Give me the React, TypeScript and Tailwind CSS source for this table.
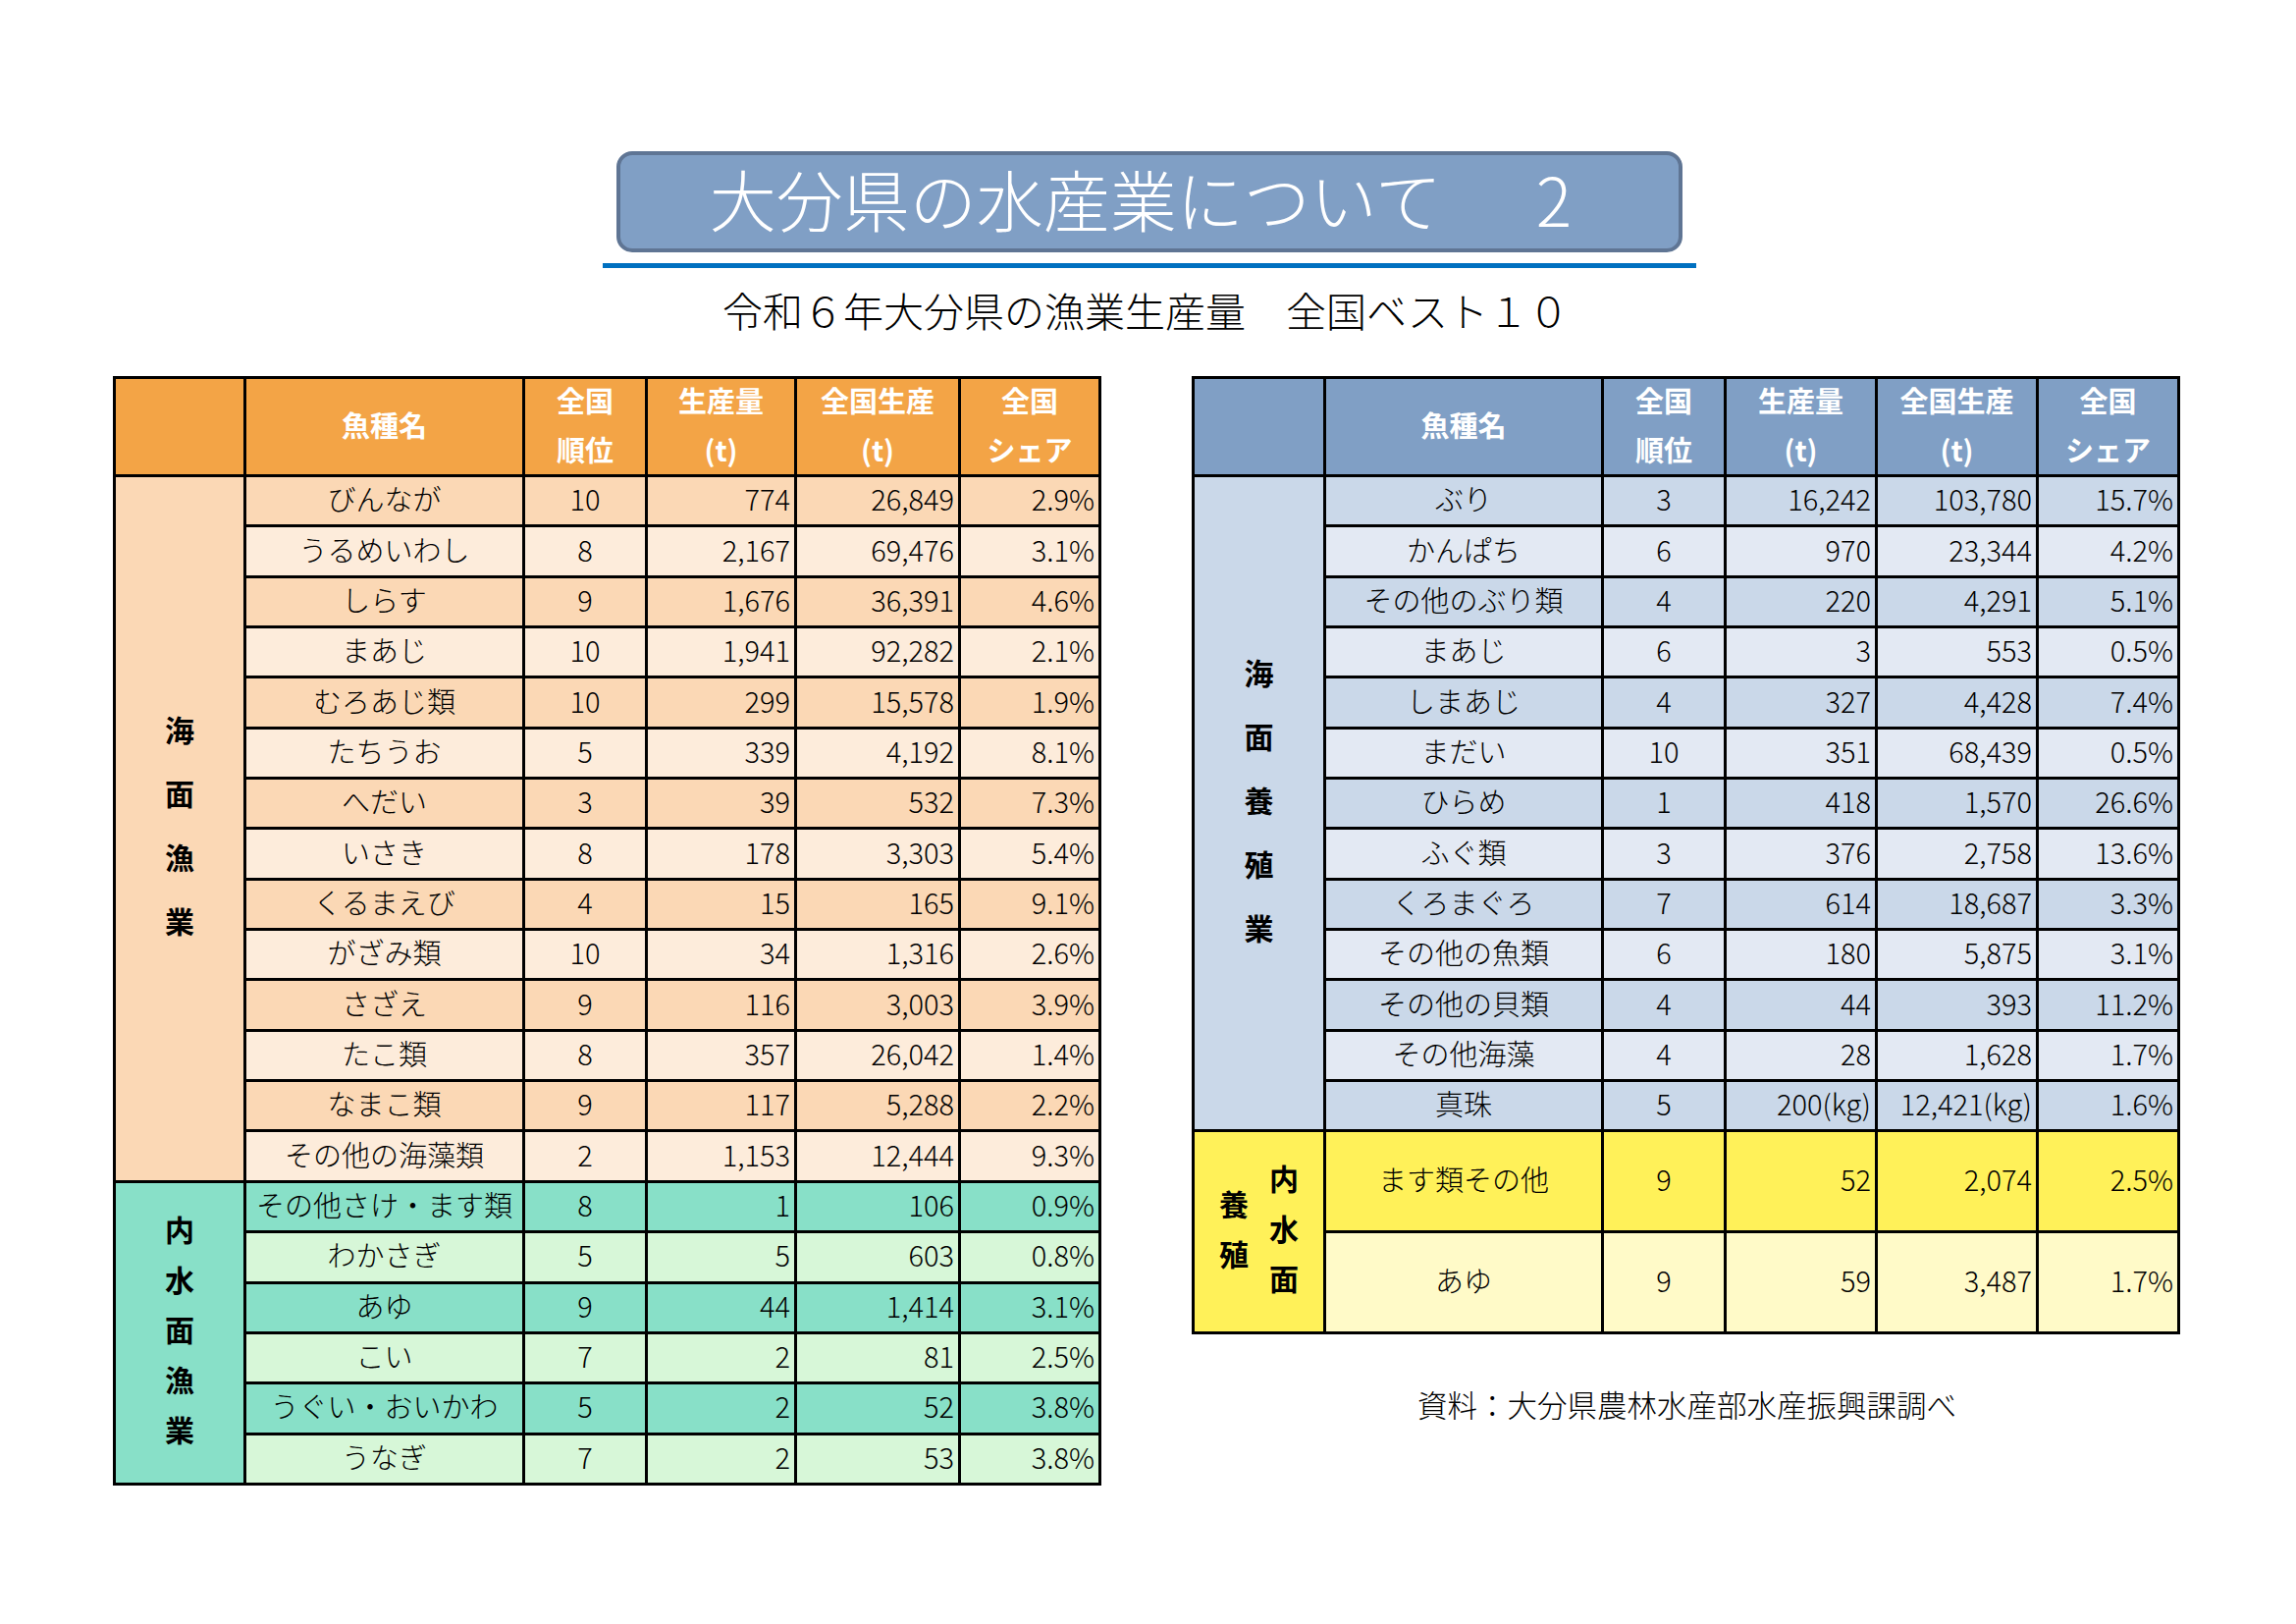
import React from "react";

type Row = [string, string, string, string, string];

const seaFishing: Row[] = [
  ["びんなが", "10", "774", "26,849", "2.9%"],
  ["うるめいわし", "8", "2,167", "69,476", "3.1%"],
  ["しらす", "9", "1,676", "36,391", "4.6%"],
  ["まあじ", "10", "1,941", "92,282", "2.1%"],
  ["むろあじ類", "10", "299", "15,578", "1.9%"],
  ["たちうお", "5", "339", "4,192", "8.1%"],
  ["へだい", "3", "39", "532", "7.3%"],
  ["いさき", "8", "178", "3,303", "5.4%"],
  ["くるまえび", "4", "15", "165", "9.1%"],
  ["がざみ類", "10", "34", "1,316", "2.6%"],
  ["さざえ", "9", "116", "3,003", "3.9%"],
  ["たこ類", "8", "357", "26,042", "1.4%"],
  ["なまこ類", "9", "117", "5,288", "2.2%"],
  ["その他の海藻類", "2", "1,153", "12,444", "9.3%"],
];

const inlandFishing: Row[] = [
  ["その他さけ・ます類", "8", "1", "106", "0.9%"],
  ["わかさぎ", "5", "5", "603", "0.8%"],
  ["あゆ", "9", "44", "1,414", "3.1%"],
  ["こい", "7", "2", "81", "2.5%"],
  ["うぐい・おいかわ", "5", "2", "52", "3.8%"],
  ["うなぎ", "7", "2", "53", "3.8%"],
];

const seaCulture: Row[] = [
  ["ぶり", "3", "16,242", "103,780", "15.7%"],
  ["かんぱち", "6", "970", "23,344", "4.2%"],
  ["その他のぶり類", "4", "220", "4,291", "5.1%"],
  ["まあじ", "6", "3", "553", "0.5%"],
  ["しまあじ", "4", "327", "4,428", "7.4%"],
  ["まだい", "10", "351", "68,439", "0.5%"],
  ["ひらめ", "1", "418", "1,570", "26.6%"],
  ["ふぐ類", "3", "376", "2,758", "13.6%"],
  ["くろまぐろ", "7", "614", "18,687", "3.3%"],
  ["その他の魚類", "6", "180", "5,875", "3.1%"],
  ["その他の貝類", "4", "44", "393", "11.2%"],
  ["その他海藻", "4", "28", "1,628", "1.7%"],
  ["真珠", "5", "200(kg)", "12,421(kg)", "1.6%"],
];

const inlandCulture: Row[] = [
  ["ます類その他", "9", "52", "2,074", "2.5%"],
  ["あゆ", "9", "59", "3,487", "1.7%"],
];

function HeaderCells({ bg }: { bg: string }) {
  const cls = `${bg} flex flex-col items-center justify-center pb-[5px] text-white font-bold text-[29px] leading-[50px]`;
  return (
    <>
      <div className={bg} />
      <div className={cls}>
        <span>魚種名</span>
      </div>
      <div className={cls}>
        <span>全国</span>
        <span>順位</span>
      </div>
      <div className={cls}>
        <span>生産量</span>
        <span>(t)</span>
      </div>
      <div className={cls}>
        <span>全国生産</span>
        <span>(t)</span>
      </div>
      <div className={cls}>
        <span>全国</span>
        <span>シェア</span>
      </div>
    </>
  );
}

function DataRow({ row, bg }: { row: Row; bg: string }) {
  const base = `${bg} flex items-center pb-[5px] text-[29px] leading-none font-light text-black whitespace-nowrap`;
  return (
    <>
      <div className={`${base} justify-center`}>{row[0]}</div>
      <div className={`${base} justify-center`}>{row[1]}</div>
      <div className={`${base} justify-end pr-[4px]`}>{row[2]}</div>
      <div className={`${base} justify-end pr-[4px]`}>{row[3]}</div>
      <div className={`${base} justify-end pr-[4px]`}>{row[4]}</div>
    </>
  );
}

function VLabel({ text, leading }: { text: string; leading: string }) {
  return (
    <div className={`flex flex-col items-center font-bold text-[30px] text-black ${leading}`}>
      {text.split("").map((c, i) => (
        <span key={i}>{c}</span>
      ))}
    </div>
  );
}

export default function App() {
  return (
    <div className="w-[2339px] h-[1654px] bg-white overflow-hidden font-['Noto_Sans_CJK_JP','Noto_Sans',sans-serif] text-black">
      {/* Title */}
      <div className="pt-[154px] pl-[628px]">
        <div className="w-[1086px] h-[103px] rounded-[16px] border-[4px] border-[#5f7594] bg-[#809fc5] flex items-center justify-center pr-[18px] pb-[8px] text-white text-[68px] font-light leading-none">
          <span>
            大分県の水産業について<span className="ml-[96px]">2</span>
          </span>
        </div>
      </div>
      <div className="mt-[11px] ml-[614px] w-[1114px] h-[5px] bg-[#0070c0]" />
      <div className="ml-[614px] w-[1114px] mt-[18px] pr-[8px] text-center text-[41px] leading-[48px] font-light">
        令和６年大分県の漁業生産量　全国ベスト１０
      </div>

      {/* Tables */}
      <div className="mt-[44px] pl-[115px] flex items-start gap-[92px]">
        {/* Left table */}
        <div className="grid w-fit grid-cols-[130px_281px_122px_149px_164px_140px] grid-rows-[97px_repeat(20,48.35px)] gap-[3px] p-[3px] bg-black">
          <HeaderCells bg="bg-[#f3a446]" />
          <div className="row-span-[14] bg-[#fbd8b5] flex items-center justify-center pb-[8px]">
            <VLabel text="海面漁業" leading="leading-[65px]" />
          </div>
          {seaFishing.map((r, i) => (
            <DataRow key={"s" + i} row={r} bg={i % 2 === 0 ? "bg-[#fbd8b5]" : "bg-[#fdecdb]"} />
          ))}
          <div className="row-span-[6] bg-[#88e0c8] flex items-center justify-center pb-[8px]">
            <VLabel text="内水面漁業" leading="leading-[51px]" />
          </div>
          {inlandFishing.map((r, i) => (
            <DataRow key={"i" + i} row={r} bg={i % 2 === 0 ? "bg-[#88e0c8]" : "bg-[#d7f7d8]"} />
          ))}
        </div>

        {/* Right column */}
        <div className="flex flex-col">
          <div className="grid w-fit grid-cols-[131px_280px_122px_151px_161px_141px] grid-rows-[97px_repeat(13,48.35px)_100px_100px] gap-[3px] p-[3px] bg-black">
            <HeaderCells bg="bg-[#809fc5]" />
            <div className="row-span-[13] bg-[#cad8e9] flex items-center justify-center pb-[8px]">
              <VLabel text="海面養殖業" leading="leading-[65px]" />
            </div>
            {seaCulture.map((r, i) => (
              <DataRow key={"c" + i} row={r} bg={i % 2 === 0 ? "bg-[#cad8e9]" : "bg-[#e3e9f3]"} />
            ))}
            <div className="row-span-[2] bg-[#fff159] flex items-center justify-center gap-[21px] pb-[8px]">
              <VLabel text="養殖" leading="leading-[51px]" />
              <VLabel text="内水面" leading="leading-[51px]" />
            </div>
            {inlandCulture.map((r, i) => (
              <DataRow key={"y" + i} row={r} bg={i === 0 ? "bg-[#fff159]" : "bg-[#fffac8]"} />
            ))}
          </div>
          <div className="mt-[53px] ml-[230px] text-[30.5px] leading-[36px] font-light whitespace-nowrap">
            資料：大分県農林水産部水産振興課調べ
          </div>
        </div>
      </div>
    </div>
  );
}
